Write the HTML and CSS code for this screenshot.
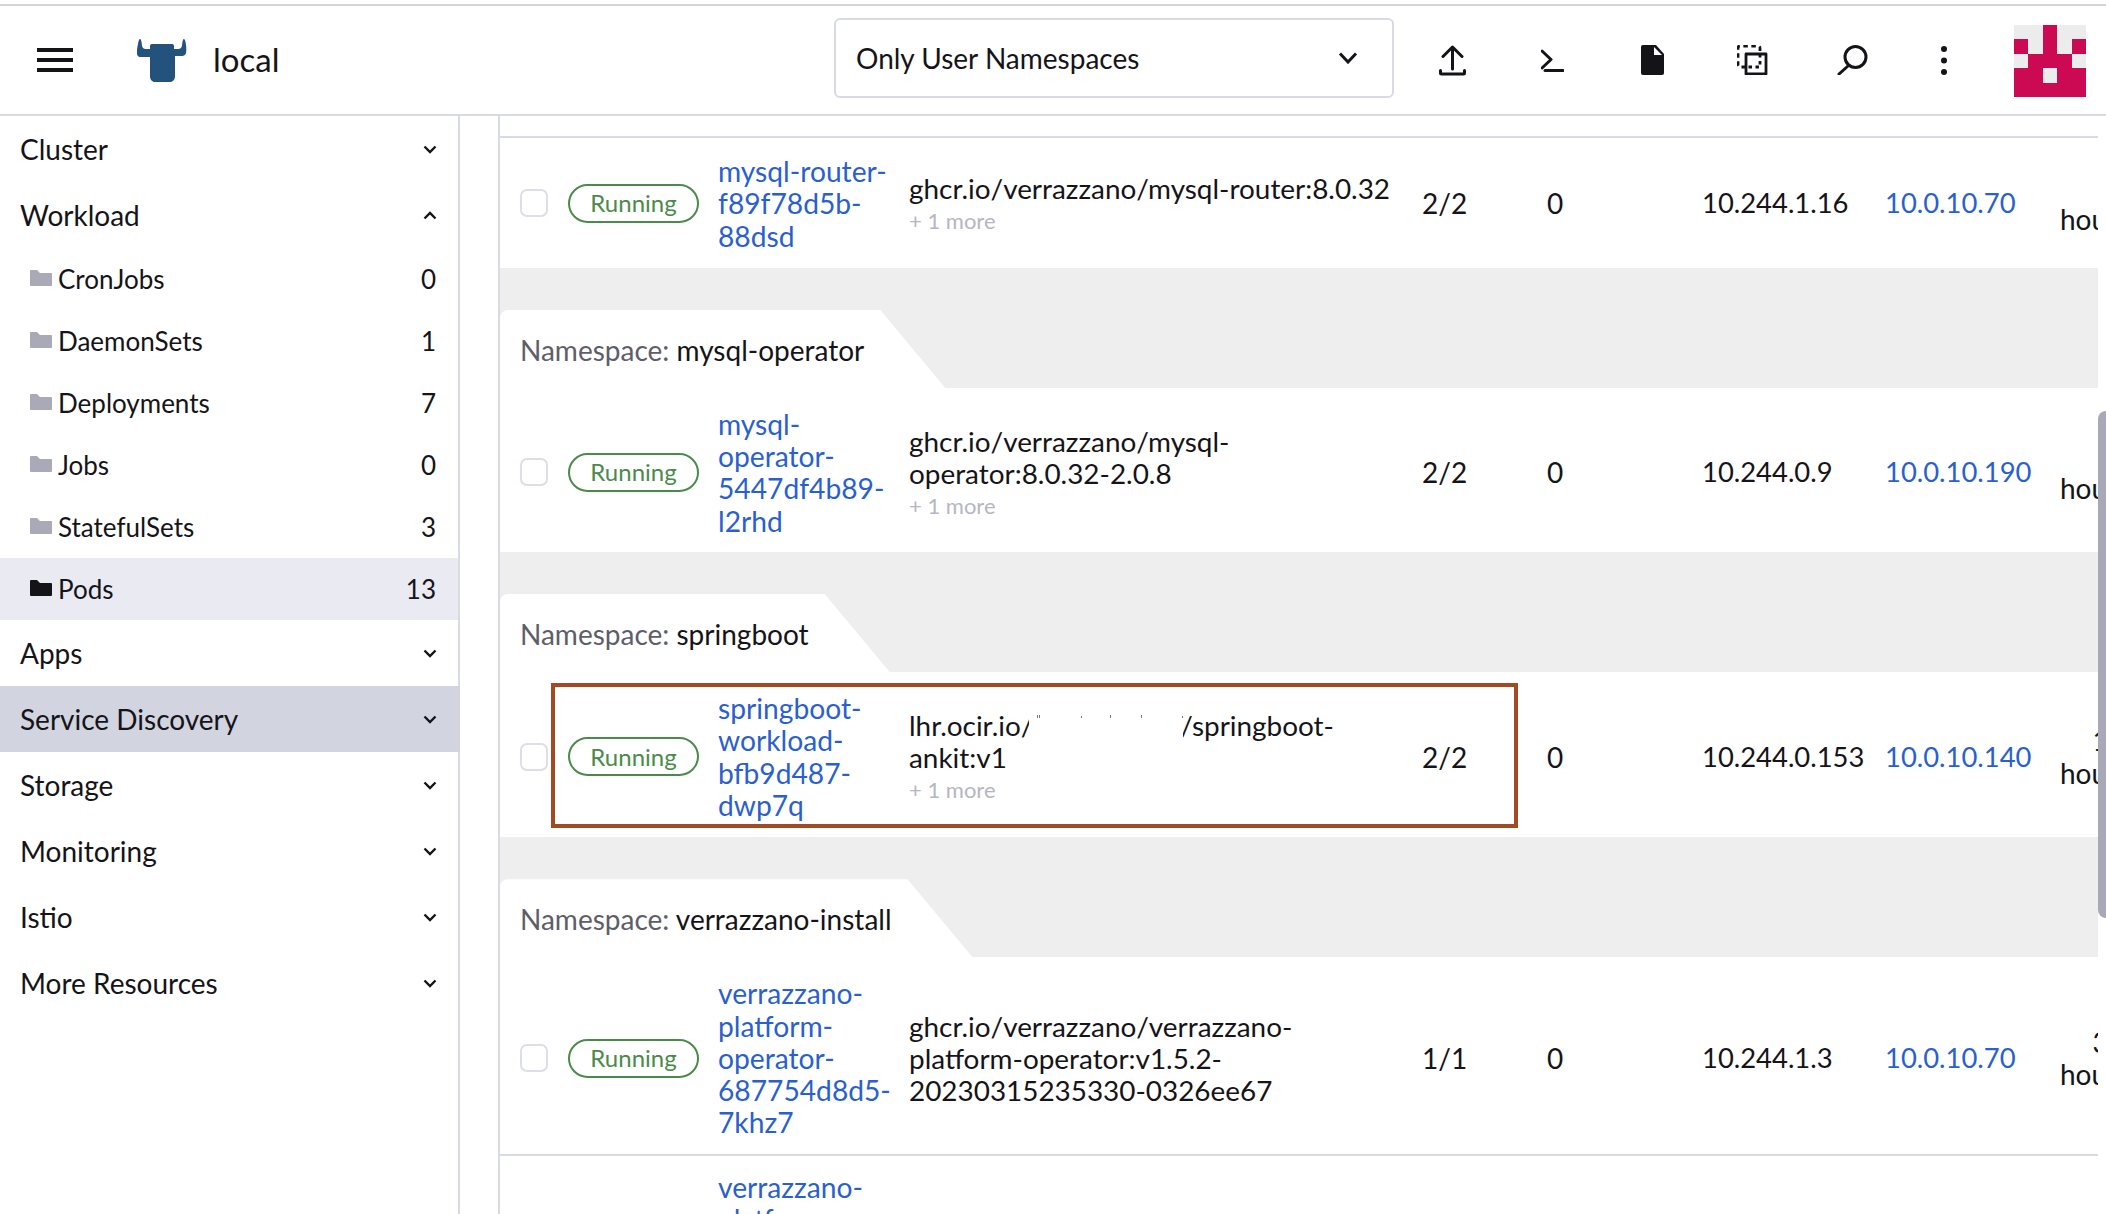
FILE: index.html
```html
<!DOCTYPE html>
<html lang="en">
<head>
<meta charset="utf-8">
<title>Pods</title>
<link rel="stylesheet" href="styles.css">
</head>
<body>
<div class="page">
  <header class="topbar">
    <button class="burger" aria-label="Menu"><span></span><span></span><span></span></button>
    <svg class="logo" viewBox="0 0 50 44" aria-hidden="true"><path d="M3 1c1 0 1.500 2 1.800 5 .3 3 .8 4.800 3.700 5H13V8c0-1.800 1.500-2 3-2h18c1.500 0 3 .2 3 2v3h4.500c2.900-.2 3.400-2 3.700-5 .3-3 .8-5 1.800-5 1 0 1.500 2.500 2 6 .4 3 .4 6 0 8-.5 2-2 3-4 3h-7v20c0 3.500-2 6-5 6H18c-3 0-5-2.500-5-6V19H3c-1.500 0-2.600-1-3-3-.3-2.500 0-6 1-10 .5-3 1-5 2-5z"/></svg>
    <span class="cluster">local</span>
    <div class="ns-select"><span>Only User Namespaces</span>
      <svg class="ns-chev" viewBox="0 0 20 12"><path d="M2 1.500l8 8.500 8-8.500"/></svg>
    </div>
    <div class="action action-first"><svg width="28" height="31" viewBox="0 0 28 31" class="ico"><path d="M13.500 2v22M4 11.500L13.500 2 23 11.500M1.500 25.500v2.500a1 1 0 0 0 1 1h22a1 1 0 0 0 1-1v-2.500"/></svg></div>
    <div class="action"><svg width="23" height="23" viewBox="0 0 23 23" class="ico"><path d="M1 2l9 8.500L1 19M4 21.500h18"/></svg></div>
    <div class="action"><svg width="23" height="30" viewBox="0 0 23 30"><path fill="#131318" d="M2 0h13l8 9v19a2 2 0 0 1-2 2H2a2 2 0 0 1-2-2V2a2 2 0 0 1 2-2z"/><path fill="#fff" d="M13 2v8h8z"/></svg></div>
    <div class="action"><svg width="31" height="30" viewBox="0 0 31 30" class="ico thin"><path stroke-dasharray="4.500 3.500" d="M9 22H3a2 2 0 0 1-2-2V3a2 2 0 0 1 2-2h18a2 2 0 0 1 2 2v6"/><path d="M9 9h20v20H9z"/><path stroke-dasharray="3.500 3.500" d="M23 9v13H9"/></svg></div>
    <div class="action"><svg width="31" height="30" viewBox="0 0 31 30" class="ico"><circle cx="18.500" cy="12" r="10.500"/><path d="M11 21l-9 8"/></svg></div>
    <div class="action action-dots"><svg width="8" height="31" viewBox="0 0 8 31"><circle cx="4" cy="4" r="3"/><circle cx="4" cy="15.500" r="3"/><circle cx="4" cy="27" r="3"/></svg></div>
    <svg class="avatar" viewBox="0 0 5 5" shape-rendering="crispEdges" aria-hidden="true">
      <rect width="5" height="5" fill="#ececec"/>
      <path fill="#cc0a53" d="M2 0h1v2h1v1h-3v-1h1zM0 1h1v1h-1zM4 1h1v1h-1zM0 3h2v1h1v-1h2v2h-5z"/>
    </svg>
  </header>

  <div class="body">
    <nav class="sidebar">
      <div class="group"><span>Cluster</span><svg class="chev" viewBox="0 0 14 9"><path d="M1.500 1.500L7 7l5.500-5.500"/></svg></div>
      <div class="group"><span>Workload</span><svg class="chev" viewBox="0 0 14 9"><path d="M1.500 7.500L7 2l5.500 5.500"/></svg></div>
      <div class="item"><svg class="folder" viewBox="0 0 22 16"><path d="M0 1a1 1 0 0 1 1-1h6l3 3h11a1 1 0 0 1 1 1v11a1 1 0 0 1-1 1H1a1 1 0 0 1-1-1z"/></svg><span class="item-name">CronJobs</span><span>0</span></div>
      <div class="item"><svg class="folder" viewBox="0 0 22 16"><path d="M0 1a1 1 0 0 1 1-1h6l3 3h11a1 1 0 0 1 1 1v11a1 1 0 0 1-1 1H1a1 1 0 0 1-1-1z"/></svg><span class="item-name">DaemonSets</span><span>1</span></div>
      <div class="item"><svg class="folder" viewBox="0 0 22 16"><path d="M0 1a1 1 0 0 1 1-1h6l3 3h11a1 1 0 0 1 1 1v11a1 1 0 0 1-1 1H1a1 1 0 0 1-1-1z"/></svg><span class="item-name">Deployments</span><span>7</span></div>
      <div class="item"><svg class="folder" viewBox="0 0 22 16"><path d="M0 1a1 1 0 0 1 1-1h6l3 3h11a1 1 0 0 1 1 1v11a1 1 0 0 1-1 1H1a1 1 0 0 1-1-1z"/></svg><span class="item-name">Jobs</span><span>0</span></div>
      <div class="item"><svg class="folder" viewBox="0 0 22 16"><path d="M0 1a1 1 0 0 1 1-1h6l3 3h11a1 1 0 0 1 1 1v11a1 1 0 0 1-1 1H1a1 1 0 0 1-1-1z"/></svg><span class="item-name">StatefulSets</span><span>3</span></div>
      <div class="item item-active"><svg class="folder" viewBox="0 0 22 16"><path d="M0 1a1 1 0 0 1 1-1h6l3 3h11a1 1 0 0 1 1 1v11a1 1 0 0 1-1 1H1a1 1 0 0 1-1-1z"/></svg><span class="item-name">Pods</span><span>13</span></div>
      <div class="group"><span>Apps</span><svg class="chev" viewBox="0 0 14 9"><path d="M1.500 1.500L7 7l5.500-5.500"/></svg></div>
      <div class="group group-hover"><span>Service Discovery</span><svg class="chev" viewBox="0 0 14 9"><path d="M1.500 1.500L7 7l5.500-5.500"/></svg></div>
      <div class="group"><span>Storage</span><svg class="chev" viewBox="0 0 14 9"><path d="M1.500 1.500L7 7l5.500-5.500"/></svg></div>
      <div class="group"><span>Monitoring</span><svg class="chev" viewBox="0 0 14 9"><path d="M1.500 1.500L7 7l5.500-5.500"/></svg></div>
      <div class="group"><span>Istio</span><svg class="chev" viewBox="0 0 14 9"><path d="M1.500 1.500L7 7l5.500-5.500"/></svg></div>
      <div class="group"><span>More Resources</span><svg class="chev" viewBox="0 0 14 9"><path d="M1.500 1.500L7 7l5.500-5.500"/></svg></div>
    </nav>

    <main class="main">
      <div class="table-top"></div>

      <div class="row row-first">
        <span class="check"></span><div><span class="badge">Running</span></div>
        <a class="name">mysql-router-f89f78d5b-88dsd</a>
        <div class="image">ghcr.io/verrazzano/mysql-router:8.0.32<div class="more">+ 1 more</div></div>
        <div>2/2</div><div>0</div><div class="ip">10.244.1.16</div><a class="node">10.0.10.70</a>
        <div class="age">5<br>hours</div>
      </div>

      <div class="band"><div class="tab"><span class="ns-label">Namespace:</span>&nbsp;mysql-operator</div></div>
      <div class="row">
        <span class="check"></span><div><span class="badge">Running</span></div>
        <a class="name">mysql-operator-5447df4b89-l2rhd</a>
        <div class="image">ghcr.io/verrazzano/mysql-operator:8.0.32-2.0.8<div class="more">+ 1 more</div></div>
        <div>2/2</div><div>0</div><div class="ip">10.244.0.9</div><a class="node">10.0.10.190</a>
        <div class="age">5<br>hours</div>
      </div>

      <div class="band"><div class="tab"><span class="ns-label">Namespace:</span>&nbsp;springboot</div></div>
      <div class="row row-tall">
        <div class="highlight"></div>
        <span class="check"></span><div><span class="badge">Running</span></div>
        <a class="name">springboot-workload-bfb9d487-dwp7q</a>
        <div class="image">lhr.ocir.io/<span class="redacted"><svg class="ticks" width="156" height="4" viewBox="0 0 156 4"><path d="M8 0h1v3H8zM10 0h1v3h-1zM52 1h1v2h-1zM81 0h1v3h-1zM112 0h1v3h-1zM153 1h1v2h-1z"/></svg></span>/springboot-<br>ankit:v1<div class="more">+ 1 more</div></div>
        <div>2/2</div><div>0</div><div class="ip">10.244.0.153</div><a class="node">10.0.10.140</a>
        <div class="age">19<br>hours</div>
      </div>

      <div class="band"><div class="tab"><span class="ns-label">Namespace:</span>&nbsp;verrazzano-install</div></div>
      <div class="row row-border">
        <span class="check"></span><div><span class="badge">Running</span></div>
        <a class="name">verrazzano-platform-operator-687754d8d5-7khz7</a>
        <div class="image">ghcr.io/verrazzano/verrazzano-platform-operator:v1.5.2-20230315235330-0326ee67</div>
        <div>1/1</div><div>0</div><div class="ip">10.244.1.3</div><a class="node">10.0.10.70</a>
        <div class="age">31<br>hours</div>
      </div>
      <div class="row row-last">
        <span class="check"></span><div><span class="badge">Running</span></div>
        <a class="name">verrazzano-platform-operator-webhook</a>
      </div>
    </main>
    <div class="scrolltrack"><div class="thumb"></div></div>
  </div>
</div>
</body>
</html>
```
FILE: styles.css
```css
* { box-sizing: border-box; }
html, body { margin: 0; padding: 0; height: 100%; overflow: hidden; background: #fff; }
body { font-family: Lato, "Liberation Sans", sans-serif; color: #141419; font-size: 28px; }
.page { height: 1214px; display: flex; flex-direction: column; padding-top: 4px; overflow: hidden; }

.topbar { height: 112px; flex: none; display: flex; align-items: center; padding: 0 20px 0 37px; border-top: 2px solid #d5d5d7; border-bottom: 2px solid #d8dae6; }
.burger { width: 36px; height: 24px; padding: 0; border: 0; background: none; display: flex; flex-direction: column; justify-content: space-between; }
.burger span { display: block; height: 4px; background: #131318; }
.logo { width: 50px; height: 44px; margin-left: 64px; fill: #23527d; flex: none; }
.cluster { font-size: 33px; margin-left: 26px; margin-bottom: 2px; }
.ns-select { margin-left: auto; width: 560px; height: 80px; margin-bottom: 5px; border: 2px solid #d8dae6; border-radius: 6px; display: flex; align-items: center; justify-content: space-between; padding: 0 34px 0 20px; font-size: 28px; }
.ns-chev { width: 20px; height: 12px; fill: none; stroke: #141419; stroke-width: 3; }
.action { width: 100px; height: 80px; display: flex; align-items: center; justify-content: center; flex: none; fill: #131318; }
.action-first { margin-left: 8px; padding-left: 2px; }
.action-dots { width: 84px; }
.ico { fill: none; stroke: #131318; stroke-width: 3; stroke-linecap: round; stroke-linejoin: round; }
.ico.thin { stroke-width: 2.800; stroke-linecap: butt; }
.avatar { width: 72px; height: 72px; margin-left: 28px; margin-top: 2px; flex: none; }

.body { flex: 1; display: flex; min-height: 0; }
.sidebar { width: 460px; flex: none; border-right: 2px solid #d8dae6; }
.group { height: 66px; display: flex; align-items: center; justify-content: space-between; padding: 0 21px 0 20px; font-size: 28px; }
.group-hover { background: #d2d4e0; margin-right: -2px; padding-right: 23px; }
.chev { width: 14px; height: 9px; fill: none; stroke: #141419; stroke-width: 2.400; }
.item { height: 62px; display: flex; align-items: center; padding: 0 22px 0 30px; font-size: 26px; }
.item-name { flex: 1; margin-left: 6px; }
.folder { width: 22px; height: 16px; fill: #a9a9b8; flex: none; margin-top: -2px; }
.item-active { background: #e9eaf2; }
.item-active .folder { fill: #131318; }

.main { width: 1600px; margin-left: 38px; flex: none; border-left: 2px solid #d8dae6; overflow: hidden; line-height: 32.300px; font-size: 28px; }
.table-top { height: 22px; border-bottom: 2px solid #d8dae6; }
.row { position: relative; display: grid; grid-template-columns: 48px 150px 191px 513px 125px 155px 183px 175px 65px; align-items: center; padding: 20px 0 15px 20px; }
.row-first { padding-top: 17px; padding-bottom: 16px; }
.row-tall { padding-bottom: 16px; }
.row-border { border-bottom: 2px solid #d8dae6; }
.row-last { padding-top: 15px; }
.check { display: block; width: 28px; height: 28px; border: 2.500px solid #dcdee8; border-radius: 7px; background: #fff; }
.badge { display: flex; align-items: center; justify-content: center; width: 131px; height: 39px; border: 2px solid #4b8b49; border-radius: 20px; color: #4b8b49; font-size: 24px; line-height: 1; }
.name { color: #2a5fd2; padding-right: 12px; font-size: 28.200px; }
.image { padding-right: 18px; font-size: 27.900px; }
.more { color: #b6b6c3; font-size: 22px; line-height: 28px; margin-top: 3px; }
.ip { font-size: 27.400px; }
.node { color: #2a5fd2; font-size: 27.400px; }
.age { text-align: right; white-space: nowrap; }
.redacted { display: inline-block; position: relative; width: 154px; height: 32px; margin: 0 -3px 0 -4px; vertical-align: top; background: #fff; }
.ticks { position: absolute; left: 0; top: 6px; fill: #77777f; }

.band { height: 120px; background: #eeeeef; display: flex; align-items: flex-end; }
.tab { height: 78px; display: flex; align-items: center; padding: 2px 81px 0 20px; background: #fff; border-top-left-radius: 8px; clip-path: polygon(0 0, calc(100% - 65px) 0, 100% 100%, 0 100%); font-size: 28px; }
.ns-label { color: #5e5e68; }

.highlight { position: absolute; left: 51px; top: 11px; width: 967px; height: 145px; border: 4px solid #a34a22; pointer-events: none; }

.scrolltrack { flex: 1; position: relative; }
.thumb { position: absolute; left: 0; right: 0; top: 295px; height: 507px; background: #a8a8b6; border-radius: 8px 0 0 8px; }
```
